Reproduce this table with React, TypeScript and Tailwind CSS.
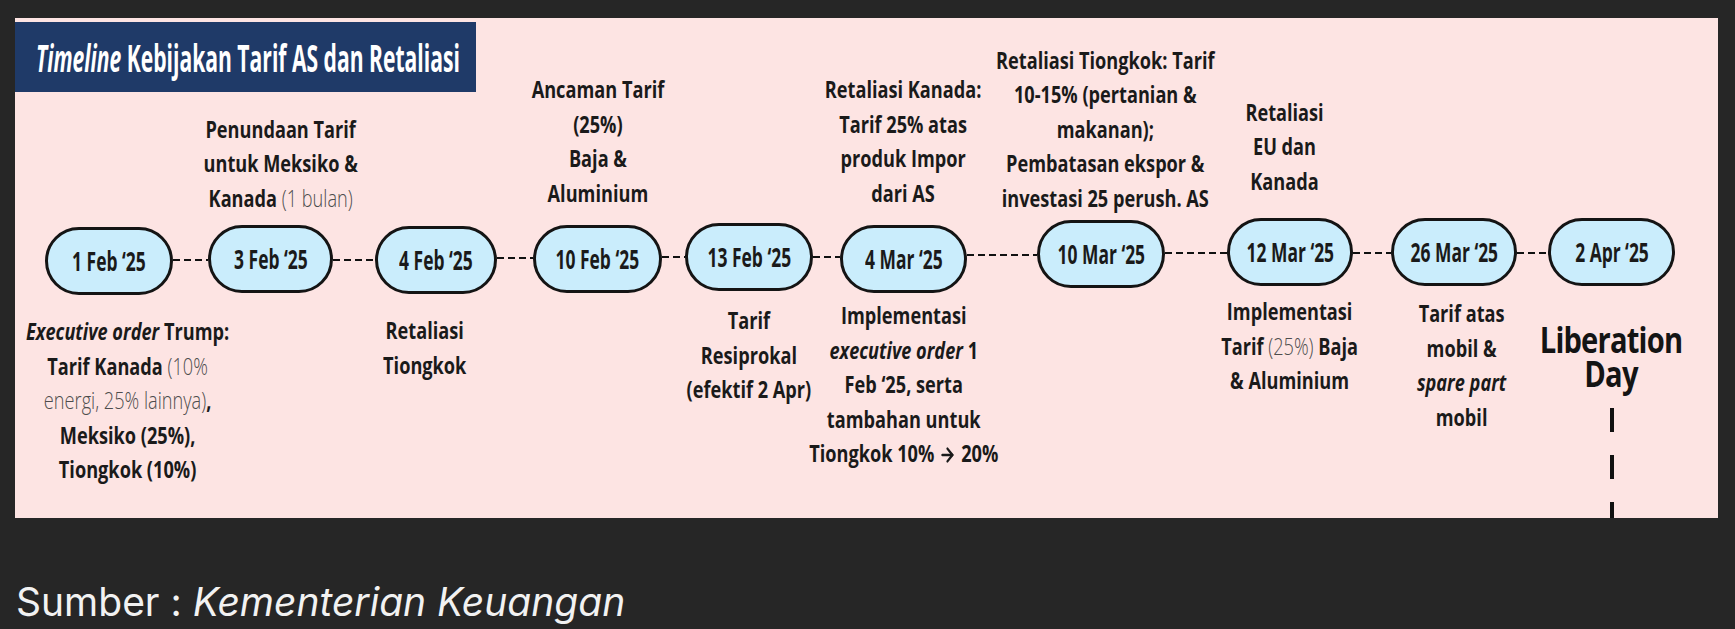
import React from "react";
import { ArrowRight } from "lucide-react";

type Block = {
  cls: string;
  lines: React.ReactNode[];
};

type Event = {
  date: string;
  w: string;
  pillMt: string;
  top?: Block;
  bottom?: Block;
  liberation?: boolean;
};

const Light = ({ children }: { children: React.ReactNode }) => (
  <span className="font-light text-[#4d4d4d]">{children}</span>
);

const events: Event[] = [
  {
    date: "1 Feb ‘25",
    w: "w-[128px]",
    pillMt: "mt-[9px]",
    bottom: {
      cls: "mt-[18px] ml-[38px]",
      lines: [
        <>
          <i>Executive order</i> Trump:
        </>,
        <>
          Tarif Kanada <Light>(10%</Light>
        </>,
        <>
          <Light>energi, 25% lainnya)</Light>,
        </>,
        "Meksiko (25%),",
        "Tiongkok (10%)",
      ],
    },
  },
  {
    date: "3 Feb ‘25",
    w: "w-[125px]",
    pillMt: "mt-[7px]",
    top: {
      cls: "mb-[3px] ml-[20px]",
      lines: [
        "Penundaan Tarif",
        "untuk Meksiko &",
        <>
          Kanada <Light>(1 bulan)</Light>
        </>,
      ],
    },
  },
  {
    date: "4 Feb ‘25",
    w: "w-[122px]",
    pillMt: "mt-[8px]",
    bottom: { cls: "mt-[17px] mr-[22px]", lines: ["Retaliasi", "Tiongkok"] },
  },
  {
    date: "10 Feb ‘25",
    w: "w-[129px]",
    pillMt: "mt-[7px]",
    top: { cls: "mb-[8px]", lines: ["Ancaman Tarif", "(25%)", "Baja &", "Aluminium"] },
  },
  {
    date: "13 Feb ‘25",
    w: "w-[128px]",
    pillMt: "mt-[5px]",
    bottom: { cls: "mt-[7px]", lines: ["Tarif", "Resiprokal", "(efektif 2 Apr)"] },
  },
  {
    date: "4 Mar ‘25",
    w: "w-[127px]",
    pillMt: "mt-[7px]",
    top: {
      cls: "mb-[8px]",
      lines: ["Retaliasi Kanada:", "Tarif 25% atas", "produk Impor", "dari AS"],
    },
    bottom: {
      cls: "mt-[2px]",
      lines: [
        "Implementasi",
        <>
          <i>executive order</i> 1
        </>,
        "Feb ‘25, serta",
        "tambahan untuk",
        <>
          Tiongkok 10%{" "}
          <ArrowRight
            size={22}
            strokeWidth={2.8}
            className="inline-block align-[-4px]"
          />{" "}
          20%
        </>,
      ],
    },
  },
  {
    date: "10 Mar ‘25",
    w: "w-[128px]",
    pillMt: "mt-[2px]",
    top: {
      cls: "mb-[3px] ml-[8px]",
      lines: [
        "Retaliasi Tiongkok: Tarif",
        "10-15% (pertanian &",
        "makanan);",
        "Pembatasan ekspor &",
        "investasi 25 perush. AS",
      ],
    },
  },
  {
    date: "12 Mar ‘25",
    w: "w-[126px]",
    pillMt: "mt-0",
    top: { cls: "mb-[20px] mr-[10px]", lines: ["Retaliasi", "EU dan", "Kanada"] },
    bottom: {
      cls: "-mt-[2px]",
      lines: [
        "Implementasi",
        <>
          Tarif <Light>(25%)</Light> Baja
        </>,
        "& Aluminium",
      ],
    },
  },
  {
    date: "26 Mar ‘25",
    w: "w-[126px]",
    pillMt: "mt-0",
    bottom: {
      cls: "ml-[16px]",
      lines: ["Tarif atas", "mobil &", <i>spare part</i>, "mobil"],
    },
  },
  { date: "2 Apr ‘25", w: "w-[127px]", pillMt: "mt-0", liberation: true },
];

// dashed links between pills: width + vertical offset from panel top
const links = [
  "w-[35px] mt-[241px]",
  "w-[42px] mt-[241px]",
  "w-[36px] mt-[239px]",
  "w-[23px] mt-[238px]",
  "w-[27px] mt-[238px]",
  "w-[70px] mt-[236px]",
  "w-[62px] mt-[234px]",
  "w-[38px] mt-[234px]",
  "w-[31px] mt-[234px]",
];

const TextBlock = ({ block }: { block: Block }) => (
  <div
    className={`w-max scale-x-[0.79] text-center text-[23px] leading-[34.5px] font-bold text-[#1a1a1a] ${block.cls}`}
  >
    {block.lines.map((line, i) => (
      <div key={i} className="whitespace-nowrap">
        {line}
      </div>
    ))}
  </div>
);

const Pill = ({ date, mt }: { date: string; mt: string }) => (
  <div
    className={`flex h-[68px] w-full items-center justify-center rounded-full border-[3px] border-[#141414] bg-[#caedfc] ${mt}`}
  >
    <span className="inline-block scale-x-[0.67] whitespace-nowrap text-[26px] leading-none font-bold text-[#1a1a1a]">
      {date}
    </span>
  </div>
);

const Column = ({ ev }: { ev: Event }) => (
  <div className={`flex shrink-0 flex-col items-center ${ev.w}`}>
    <div className="flex h-[200px] w-full flex-col items-center justify-end">
      {ev.top && <TextBlock block={ev.top} />}
    </div>
    <div className="h-[78px] w-full">
      <Pill date={ev.date} mt={ev.pillMt} />
    </div>
    <div className="flex w-full flex-col items-center">
      {ev.bottom && <TextBlock block={ev.bottom} />}
      {ev.liberation && (
        <div className="mt-[27px] flex flex-col items-center">
          <div className="w-max scale-x-[0.81] text-center text-[36px] leading-[34px] font-bold tracking-[-1px] text-[#141414]">
            <div>Liberation</div>
            <div>Day</div>
          </div>
          <div className="mt-[17px] h-[110px] w-[4px] bg-[image:repeating-linear-gradient(180deg,#111_0_24px,transparent_24px_47px)]" />
        </div>
      )}
    </div>
  </div>
);

export default function App() {
  return (
    <div className="min-h-screen w-full bg-[#262626] pt-[18px] font-['Open_Sans',sans-serif]">
      <div className="ml-[15px] grid h-[500px] w-[1703px] overflow-hidden bg-[#fde4e3]">
        <div className="col-start-1 row-start-1 flex items-start pl-[30px]">
          {events.map((ev, i) => (
            <React.Fragment key={ev.date}>
              <Column ev={ev} />
              {i < links.length && (
                <div
                  className={`h-[2px] shrink-0 bg-[image:repeating-linear-gradient(90deg,#111_0_7px,transparent_7px_11px)] ${links[i]}`}
                />
              )}
            </React.Fragment>
          ))}
        </div>
        <div className="col-start-1 row-start-1 mt-[4px] flex h-[70px] w-[461px] items-center self-start bg-[#1f3a68] pl-[21px]">
          <span className="inline-block origin-left scale-x-[0.57] whitespace-nowrap text-[37px] leading-none font-bold text-white">
            <i>Timeline</i> Kebijakan Tarif AS dan Retaliasi
          </span>
        </div>
      </div>
      <p className="mt-[61px] ml-[16px] font-['Inter',sans-serif] text-[39px] leading-[46px] text-[#f2f2f2]">
        Sumber : <i>Kementerian Keuangan</i>
      </p>
    </div>
  );
}
